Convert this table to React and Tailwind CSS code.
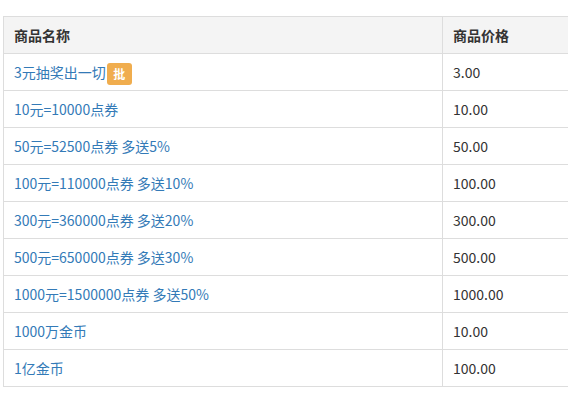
const rows = [
  { name: "3元抽奖出一切", price: "3.00", badge: "批" },
  { name: "10元=10000点券", price: "10.00" },
  { name: "50元=52500点券 多送5%", price: "50.00" },
  { name: "100元=110000点券 多送10%", price: "100.00" },
  { name: "300元=360000点券 多送20%", price: "300.00" },
  { name: "500元=650000点券 多送30%", price: "500.00" },
  { name: "1000元=1500000点券 多送50%", price: "1000.00" },
  { name: "1000万金币", price: "10.00" },
  { name: "1亿金币", price: "100.00" },
];

export default function App() {
  return (
    <div
      className="w-[568px] h-[395px] overflow-hidden bg-white pt-4 pl-[3px]"
      style={{ fontFamily: '"Noto Sans CJK SC", "Noto Sans", sans-serif' }}
    >
      <table className="w-[700px] border-collapse text-[14px] leading-5 text-[#333]">
        <thead>
          <tr className="bg-[#f4f4f4]">
            <th className="w-[439px] border border-[#ddd] px-[10px] py-2 text-left font-bold">
              商品名称
            </th>
            <th className="border border-[#ddd] px-[10px] py-2 text-left font-bold">
              商品价格
            </th>
          </tr>
        </thead>
        <tbody>
          {rows.map((r, i) => (
            <tr key={i}>
              <td className="h-[37px] border border-[#ddd] px-[10px] py-2">
                <span className="text-[#337ab7]">{r.name}</span>
                {r.badge && (
                  <span className="-my-1 ml-px inline-block h-[22px] w-[25px] rounded-[3px] bg-[#f0ad4e] text-center align-middle text-[12px] font-bold leading-[22px] text-white">
                    {r.badge}
                  </span>
                )}
              </td>
              <td className="border border-[#ddd] px-[10px] py-2">{r.price}</td>
            </tr>
          ))}
        </tbody>
      </table>
    </div>
  );
}
